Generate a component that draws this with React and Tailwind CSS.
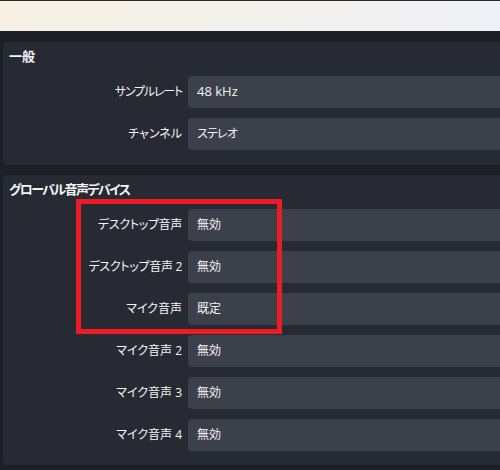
import React from "react";

const font = { fontFamily: '"Open Sans", "Noto Sans CJK JP", sans-serif' };

function Row({ label, value, lt = "", vt = "text-[12px]" }) {
  return (
    <div className="flex items-center h-[32px]">
      <div className={"w-[179px] shrink-0 text-right text-[12px] text-[#f4f4f6] [font-feature-settings:'palt'] leading-none " + lt}>
        {label}
      </div>
      <div className={"ml-[6px] flex-1 h-[32px] rounded-[4px] bg-[#3c404b] flex items-center pl-[9px] text-[#f4f4f6] [font-feature-settings:'palt'] " + vt}>
        {value}
      </div>
    </div>
  );
}

function Panel({ title, titleClass = "", children, className }) {
  return (
    <div className={"ml-[3px] w-[520px] rounded-[4px] bg-[#272a33] pt-[6px] " + className}>
      <div className={"pl-[6px] h-[16px] leading-[16px] text-[13px] font-bold text-[#f4f4f6] [font-feature-settings:'palt'] " + titleClass}>
        {title}
      </div>
      <div className="mt-[12px] flex flex-col gap-[10px]">{children}</div>
    </div>
  );
}

export default function App() {
  return (
    <div className="relative w-[500px] h-[470px] overflow-hidden bg-[#1d1f26]" style={font}>
      <div className="h-[31px] border-t border-[#2b2b2b] bg-gradient-to-r from-[#f6f1e3] to-[#eff0f5]" />
      <Panel className="mt-[11px] h-[123px]" title="一般">
        <Row label="サンプルレート" value="48 kHz" lt="tracking-[-1.2px]" vt="text-[13px]" />
        <Row label="チャンネル" value="ステレオ" vt="text-[12px] tracking-[-0.8px]" />
      </Panel>
      <Panel className="mt-[10px] h-[290px]" title="グローバル音声デバイス" titleClass="tracking-[-1.6px]">
        <Row label="デスクトップ音声" value="無効" lt="tracking-[-0.3px]" />
        <Row label="デスクトップ音声 2" value="無効" lt="tracking-[-0.3px]" />
        <Row label="マイク音声" value="既定" />
        <Row label="マイク音声 2" value="無効" />
        <Row label="マイク音声 3" value="無効" />
        <Row label="マイク音声 4" value="無効" />
      </Panel>
      <div className="absolute left-[76px] top-[199px] w-[206px] h-[135px] border-[5px] border-[#ed1c24]" />
    </div>
  );
}
